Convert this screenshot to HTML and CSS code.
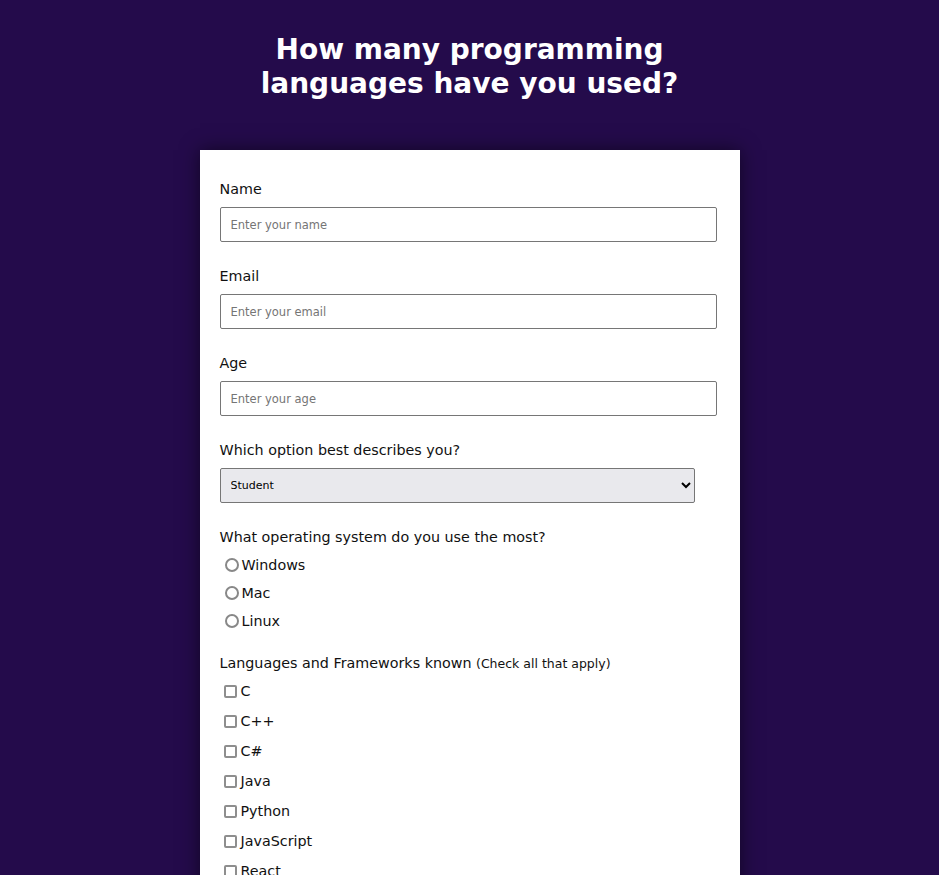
FILE: index.html
```html
<!DOCTYPE html>
<html lang="en">
<head>
<meta charset="utf-8">
<title>Survey</title>
<link rel="stylesheet" href="styles.css">
</head>
<body>
<div class="container">
  <h1 class="title">How many programming languages have you used?</h1>
  <form class="card">
    <div class="group">
      <label class="label" for="name">Name</label>
      <input class="field" id="name" type="text" placeholder="Enter your name">
    </div>
    <div class="group">
      <label class="label" for="email">Email</label>
      <input class="field" id="email" type="email" placeholder="Enter your email">
    </div>
    <div class="group">
      <label class="label" for="age">Age</label>
      <input class="field" id="age" type="number" placeholder="Enter your age">
    </div>
    <div class="group">
      <label class="label" for="role">Which option best describes you?</label>
      <select class="dropdown" id="role">
        <option>Student</option>
        <option>Full Time Job</option>
        <option>Other</option>
      </select>
    </div>
    <div class="group group-radio">
      <p class="label label-radio">What operating system do you use the most?</p>
      <label class="choice radio-row"><input type="radio" name="os" class="radio"><span>Windows</span></label>
      <label class="choice radio-row"><input type="radio" name="os" class="radio"><span>Mac</span></label>
      <label class="choice radio-row"><input type="radio" name="os" class="radio"><span>Linux</span></label>
    </div>
    <div class="group">
      <p class="label label-check">Languages and Frameworks known <span class="hint">(Check all that apply)</span></p>
      <label class="choice check-row"><input type="checkbox" class="check"><span>C</span></label>
      <label class="choice check-row"><input type="checkbox" class="check"><span>C++</span></label>
      <label class="choice check-row"><input type="checkbox" class="check"><span>C#</span></label>
      <label class="choice check-row"><input type="checkbox" class="check"><span>Java</span></label>
      <label class="choice check-row"><input type="checkbox" class="check"><span>Python</span></label>
      <label class="choice check-row"><input type="checkbox" class="check"><span>JavaScript</span></label>
      <label class="choice check-row"><input type="checkbox" class="check"><span>React</span></label>
      <label class="choice check-row"><input type="checkbox" class="check"><span>Angular</span></label>
    </div>
  </form>
</div>
</body>
</html>
```

FILE: styles.css
```css
html, body {
  margin: 0;
  padding: 0;
}
body {
  background: #240b4b;
  font-family: "DejaVu Sans", Verdana, sans-serif;
  color: #111;
}
.container {
  width: 540px;
  margin: 0 auto;
}
.title {
  margin: 0;
  padding: 33px 0 49px;
  color: #fff;
  font-size: 28px;
  line-height: 34px;
  font-weight: bold;
  text-align: center;
}
.card {
  background: #fff;
  padding: 30px 20px 20px;
  box-shadow: 0 0 18px rgba(0,0,0,0.55);
}
.group {
  margin-bottom: 25px;
}
.group-radio {
  margin-bottom: 19px;
}
.label {
  display: block;
  margin: 0 0 9px;
  font-size: 14.3px;
  line-height: 18px;
  color: #111;
}
.label-radio {
  margin-bottom: 5px;
}
.label-check {
  margin-bottom: 3px;
}
.hint {
  font-size: 12.5px;
}
.field {
  display: block;
  box-sizing: border-box;
  width: 497px;
  height: 35px;
  padding: 0 10px;
  border: 1px solid #767676;
  border-radius: 2px;
  font-family: inherit;
  font-size: 11.5px;
  background: #fff;
}
.field::placeholder {
  color: #757575;
}
.dropdown {
  display: block;
  box-sizing: border-box;
  width: 475px;
  height: 35px;
  padding: 0 6px;
  border: 1px solid #767676;
  border-radius: 2px;
  background: #e9e9ed;
  font-family: inherit;
  font-size: 11px;
  color: #000;
}
.choice {
  display: flex;
  align-items: center;
  font-size: 14.3px;
  color: #111;
}
.radio-row {
  height: 28px;
}
.check-row {
  height: 30px;
}
.radio {
  appearance: none;
  box-sizing: border-box;
  margin: 0 3px 0 5px;
  width: 14px;
  height: 14px;
  border: 2px solid #888;
  border-radius: 50%;
  background: #fff;
}
.check {
  appearance: none;
  box-sizing: border-box;
  margin: 0 4px 0 4px;
  width: 13px;
  height: 13px;
  border: 2px solid #8e8e8e;
  border-radius: 2px;
  background: #fff;
}
```
